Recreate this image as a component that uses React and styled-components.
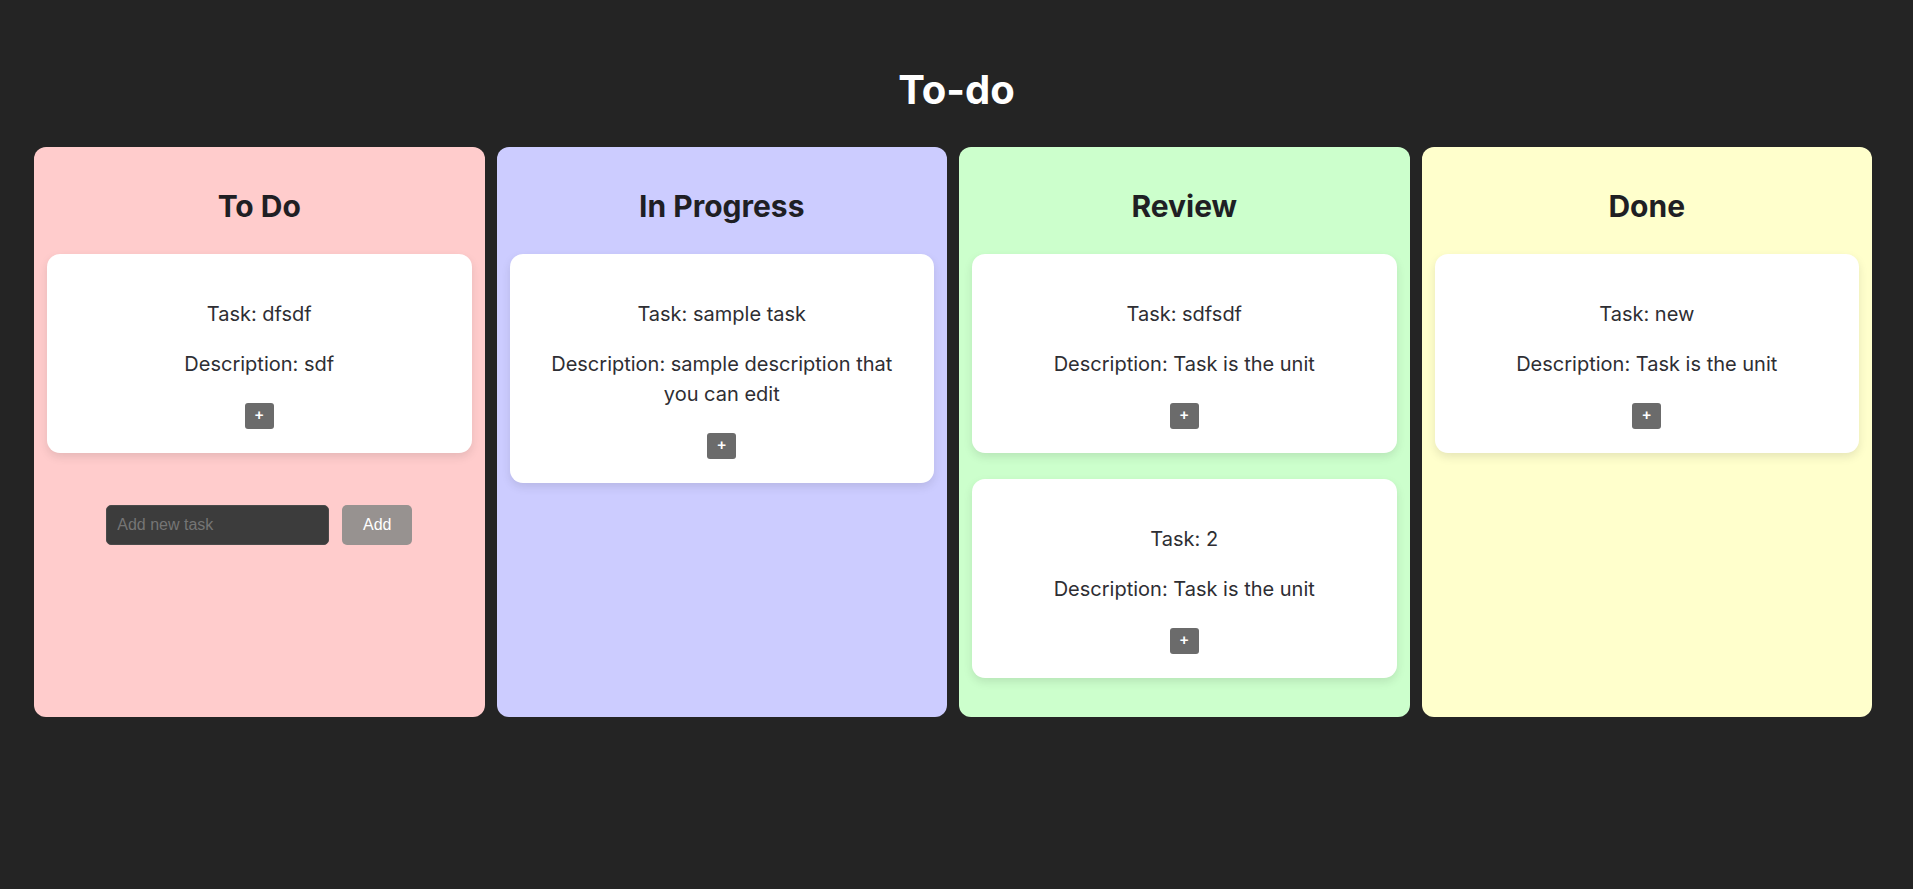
import styled, { createGlobalStyle } from "styled-components";

const GlobalStyle = createGlobalStyle`
    body {
        margin: 0;
        background-color: #242424;
        font-family: Inter, "Noto Sans", sans-serif;
    }
`;

const columns = [
    {
        title: "To Do",
        color: "#ffcccc",
        form: true,
        tasks: [{ name: "dfsdf", description: "sdf" }],
    },
    {
        title: "In Progress",
        color: "#ccccff",
        tasks: [{ name: "sample task", description: "sample description that you can edit" }],
    },
    {
        title: "Review",
        color: "#ccffcc",
        tasks: [
            { name: "sdfsdf", description: "Task is the unit" },
            { name: "2", description: "Task is the unit" },
        ],
    },
    {
        title: "Done",
        color: "#ffffcc",
        tasks: [{ name: "new", description: "Task is the unit" }],
    },
];

export default function App() {
    return (
        <>
            <GlobalStyle />
            <SPage>
                <STitle>To-do</STitle>
                <SBoard>
                    {columns.map((col) => (
                        <SColumn key={col.title} $bg={col.color}>
                            <SColumnTitle>{col.title}</SColumnTitle>
                            {col.tasks.map((task, i) => (
                                <SCard key={i}>
                                    <SText>Task: {task.name}</SText>
                                    <SText>Description: {task.description}</SText>
                                    <SActions>
                                        <SPlus>+</SPlus>
                                    </SActions>
                                </SCard>
                            ))}
                            {col.form && (
                                <SForm>
                                    <SInput placeholder="Add new task" />
                                    <SAddButton>Add</SAddButton>
                                </SForm>
                            )}
                        </SColumn>
                    ))}
                </SBoard>
            </SPage>
        </>
    );
}

const SPage = styled.div`
    padding-top: 66px;
    min-height: 100vh;
    box-sizing: border-box;
`;
const STitle = styled.h1`
    margin: 0 0 33px;
    text-align: center;
    color: #ffffff;
    font-size: 40px;
    font-weight: 700;
    line-height: 48px;
`;
const SBoard = styled.div`
    display: grid;
    grid-template-columns: repeat(4, 1fr);
    gap: 12px;
    padding: 0 41px 0 34px;
`;
const SColumn = styled.div`
    background-color: ${(p) => p.$bg};
    border-radius: 12px;
    padding: 0 13px 13px;
    min-height: 570px;
    box-sizing: border-box;
`;
const SColumnTitle = styled.h2`
    margin: 41px 0 30px;
    text-align: center;
    font-size: 30px;
    font-weight: 700;
    line-height: 36px;
    color: #1f1f24;
`;
const SCard = styled.div`
    background-color: #ffffff;
    border-radius: 13px;
    padding: 25px 24px 24px;
    margin-bottom: 26px;
    text-align: center;
    box-shadow: 0 4px 10px rgba(0, 0, 0, 0.1);
`;
const SText = styled.p`
    margin: 0 0 20px;
    font-size: 20px;
    line-height: 30px;
    color: #2e2e33;
    &:first-child {
        margin-top: 20px;
    }
`;
const SActions = styled.div`
    display: flex;
    justify-content: center;
    padding-top: 4px;
`;
const SPlus = styled.button`
    width: 29px;
    height: 26px;
    padding: 0 0 2px;
    border: none;
    border-radius: 3px;
    background-color: #6b6b6b;
    color: #ffffff;
    font-family: "Liberation Sans", Arial, sans-serif;
    font-size: 15px;
    font-weight: 700;
    line-height: 24px;
    cursor: pointer;
`;
const SForm = styled.div`
    display: flex;
    justify-content: center;
    gap: 13px;
    margin-top: 52px;
`;
const SInput = styled.input`
    width: 223px;
    height: 40px;
    box-sizing: border-box;
    padding: 0 10px;
    border: 1px solid #4a4a4a;
    border-radius: 5px;
    background-color: #3c3c3c;
    color: #ffffff;
    font-family: "Liberation Sans", Arial, sans-serif;
    font-size: 16px;
    outline: none;
    &::placeholder {
        color: #757575;
    }
`;
const SAddButton = styled.button`
    width: 70px;
    height: 40px;
    border: none;
    border-radius: 5px;
    background-color: #979290;
    color: #ffffff;
    font-family: "Liberation Sans", Arial, sans-serif;
    font-size: 16px;
    cursor: pointer;
`;
